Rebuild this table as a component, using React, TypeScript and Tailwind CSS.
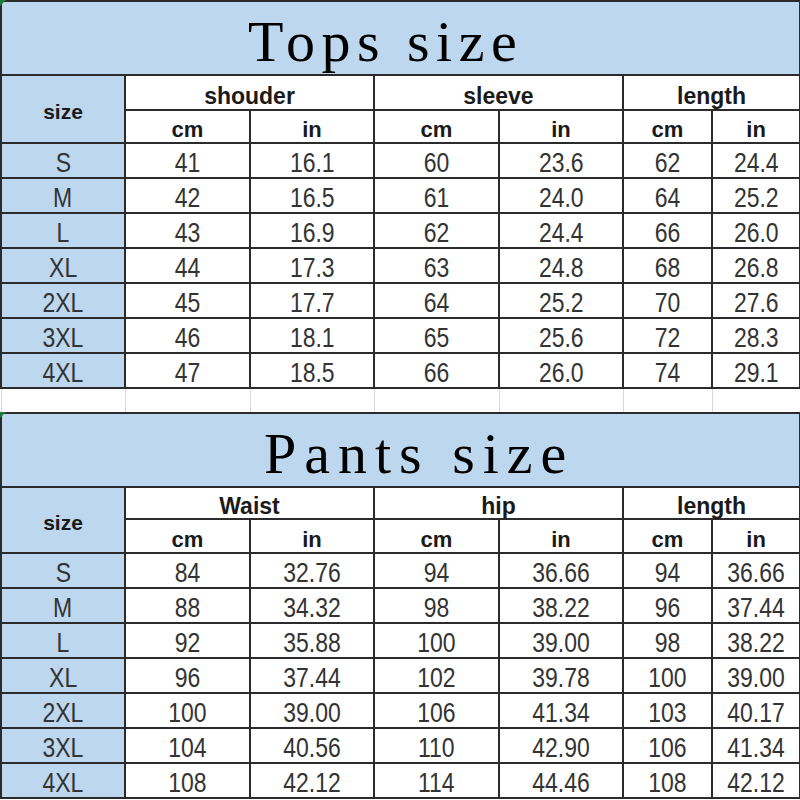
import React from "react";

type Row = [string, string, string, string, string, string, string];

const tops: Row[] = [
  ["S", "41", "16.1", "60", "23.6", "62", "24.4"],
  ["M", "42", "16.5", "61", "24.0", "64", "25.2"],
  ["L", "43", "16.9", "62", "24.4", "66", "26.0"],
  ["XL", "44", "17.3", "63", "24.8", "68", "26.8"],
  ["2XL", "45", "17.7", "64", "25.2", "70", "27.6"],
  ["3XL", "46", "18.1", "65", "25.6", "72", "28.3"],
  ["4XL", "47", "18.5", "66", "26.0", "74", "29.1"],
];

const pants: Row[] = [
  ["S", "84", "32.76", "94", "36.66", "94", "36.66"],
  ["M", "88", "34.32", "98", "38.22", "96", "37.44"],
  ["L", "92", "35.88", "100", "39.00", "98", "38.22"],
  ["XL", "96", "37.44", "102", "39.78", "100", "39.00"],
  ["2XL", "100", "39.00", "106", "41.34", "103", "40.17"],
  ["3XL", "104", "40.56", "110", "42.90", "106", "41.34"],
  ["4XL", "108", "42.12", "114", "44.46", "108", "42.12"],
];

const cell = "border-2 border-[#2b2b2b] p-0 text-center";
const head = `${cell} font-['Liberation_Sans',Arial,sans-serif] font-bold text-[#1a1a1a] leading-none`;
const data = `${cell} pt-[4px] font-['Liberation_Sans',Arial,sans-serif] text-[28px] text-[#333] leading-none`;

function Title({ text, indent, track }: { text: string; indent: string; track: string }) {
  return (
    <td colSpan={7} className={`${cell} bg-[#bdd7ee] h-[74px] relative`}>
      <span className="absolute left-[-2px] top-[-2px] w-0 h-0 border-t-[6px] border-r-[6px] border-t-[#1f7a3a] border-r-transparent" />
      <div className={`flex items-start h-full pt-[11px] ${indent}`}>
        <span className={`whitespace-pre font-['Liberation_Serif','Times_New_Roman',serif] text-[58px] leading-none text-black ${track}`}>
          {text}
        </span>
      </div>
    </td>
  );
}

function Section({
  title,
  indent,
  track,
  groups,
  rows,
  h1,
  h2,
}: {
  title: string;
  indent: string;
  track: string;
  groups: string[];
  rows: Row[];
  h1: string;
  h2: string;
}) {
  return (
    <>
      <tr>
        <Title text={title} indent={indent} track={track} />
      </tr>
      <tr className={h1}>
        <td rowSpan={2} className={`${head} text-[21px] pt-[4px] bg-[#bdd7ee]`}>
          size
        </td>
        {groups.map((g) => (
          <td key={g} colSpan={2} className={`${head} text-[23px] pt-[7px]`}>
            {g}
          </td>
        ))}
      </tr>
      <tr className={h2}>
        {["cm", "in", "cm", "in", "cm", "in"].map((u, i) => (
          <td key={i} className={`${head} text-[22px] pt-[7px]`}>
            {u}
          </td>
        ))}
      </tr>
      {rows.map((r) => (
        <tr key={r[0]} className="h-[35px]">
          {r.map((v, i) => (
            <td key={i} className={`${data} ${i === 0 ? "bg-[#bdd7ee]" : "bg-white"}`}>
              <span className="inline-block scale-x-[0.82]">{v}</span>
            </td>
          ))}
        </tr>
      ))}
    </>
  );
}

export default function App() {
  return (
    <div className="w-[800px] h-[800px] overflow-hidden bg-white">
      <table className="w-[799px] table-fixed border-collapse">
        <colgroup>
          <col className="w-[124px]" />
          <col className="w-[125px]" />
          <col className="w-[124px]" />
          <col className="w-[125px]" />
          <col className="w-[124px]" />
          <col className="w-[89px]" />
          <col className="w-[88px]" />
        </colgroup>
        <tbody>
          <Section
            title="Tops size"
            indent="pl-[246px]"
            track="tracking-[6.5px]"
            groups={["shouder", "sleeve", "length"]}
            rows={tops}
            h1="h-[35px]"
            h2="h-[33px]"
          />
          <tr className="h-[25px]">
            {Array.from({ length: 7 }).map((_, i) => (
              <td key={i} className="border border-[#d9d9d9] p-0" />
            ))}
          </tr>
          <Section
            title="Pants size"
            indent="pl-[262px]"
            track="tracking-[8px]"
            groups={["Waist", "hip", "length"]}
            rows={pants}
            h1="h-[32px]"
            h2="h-[34px]"
          />
        </tbody>
      </table>
    </div>
  );
}
